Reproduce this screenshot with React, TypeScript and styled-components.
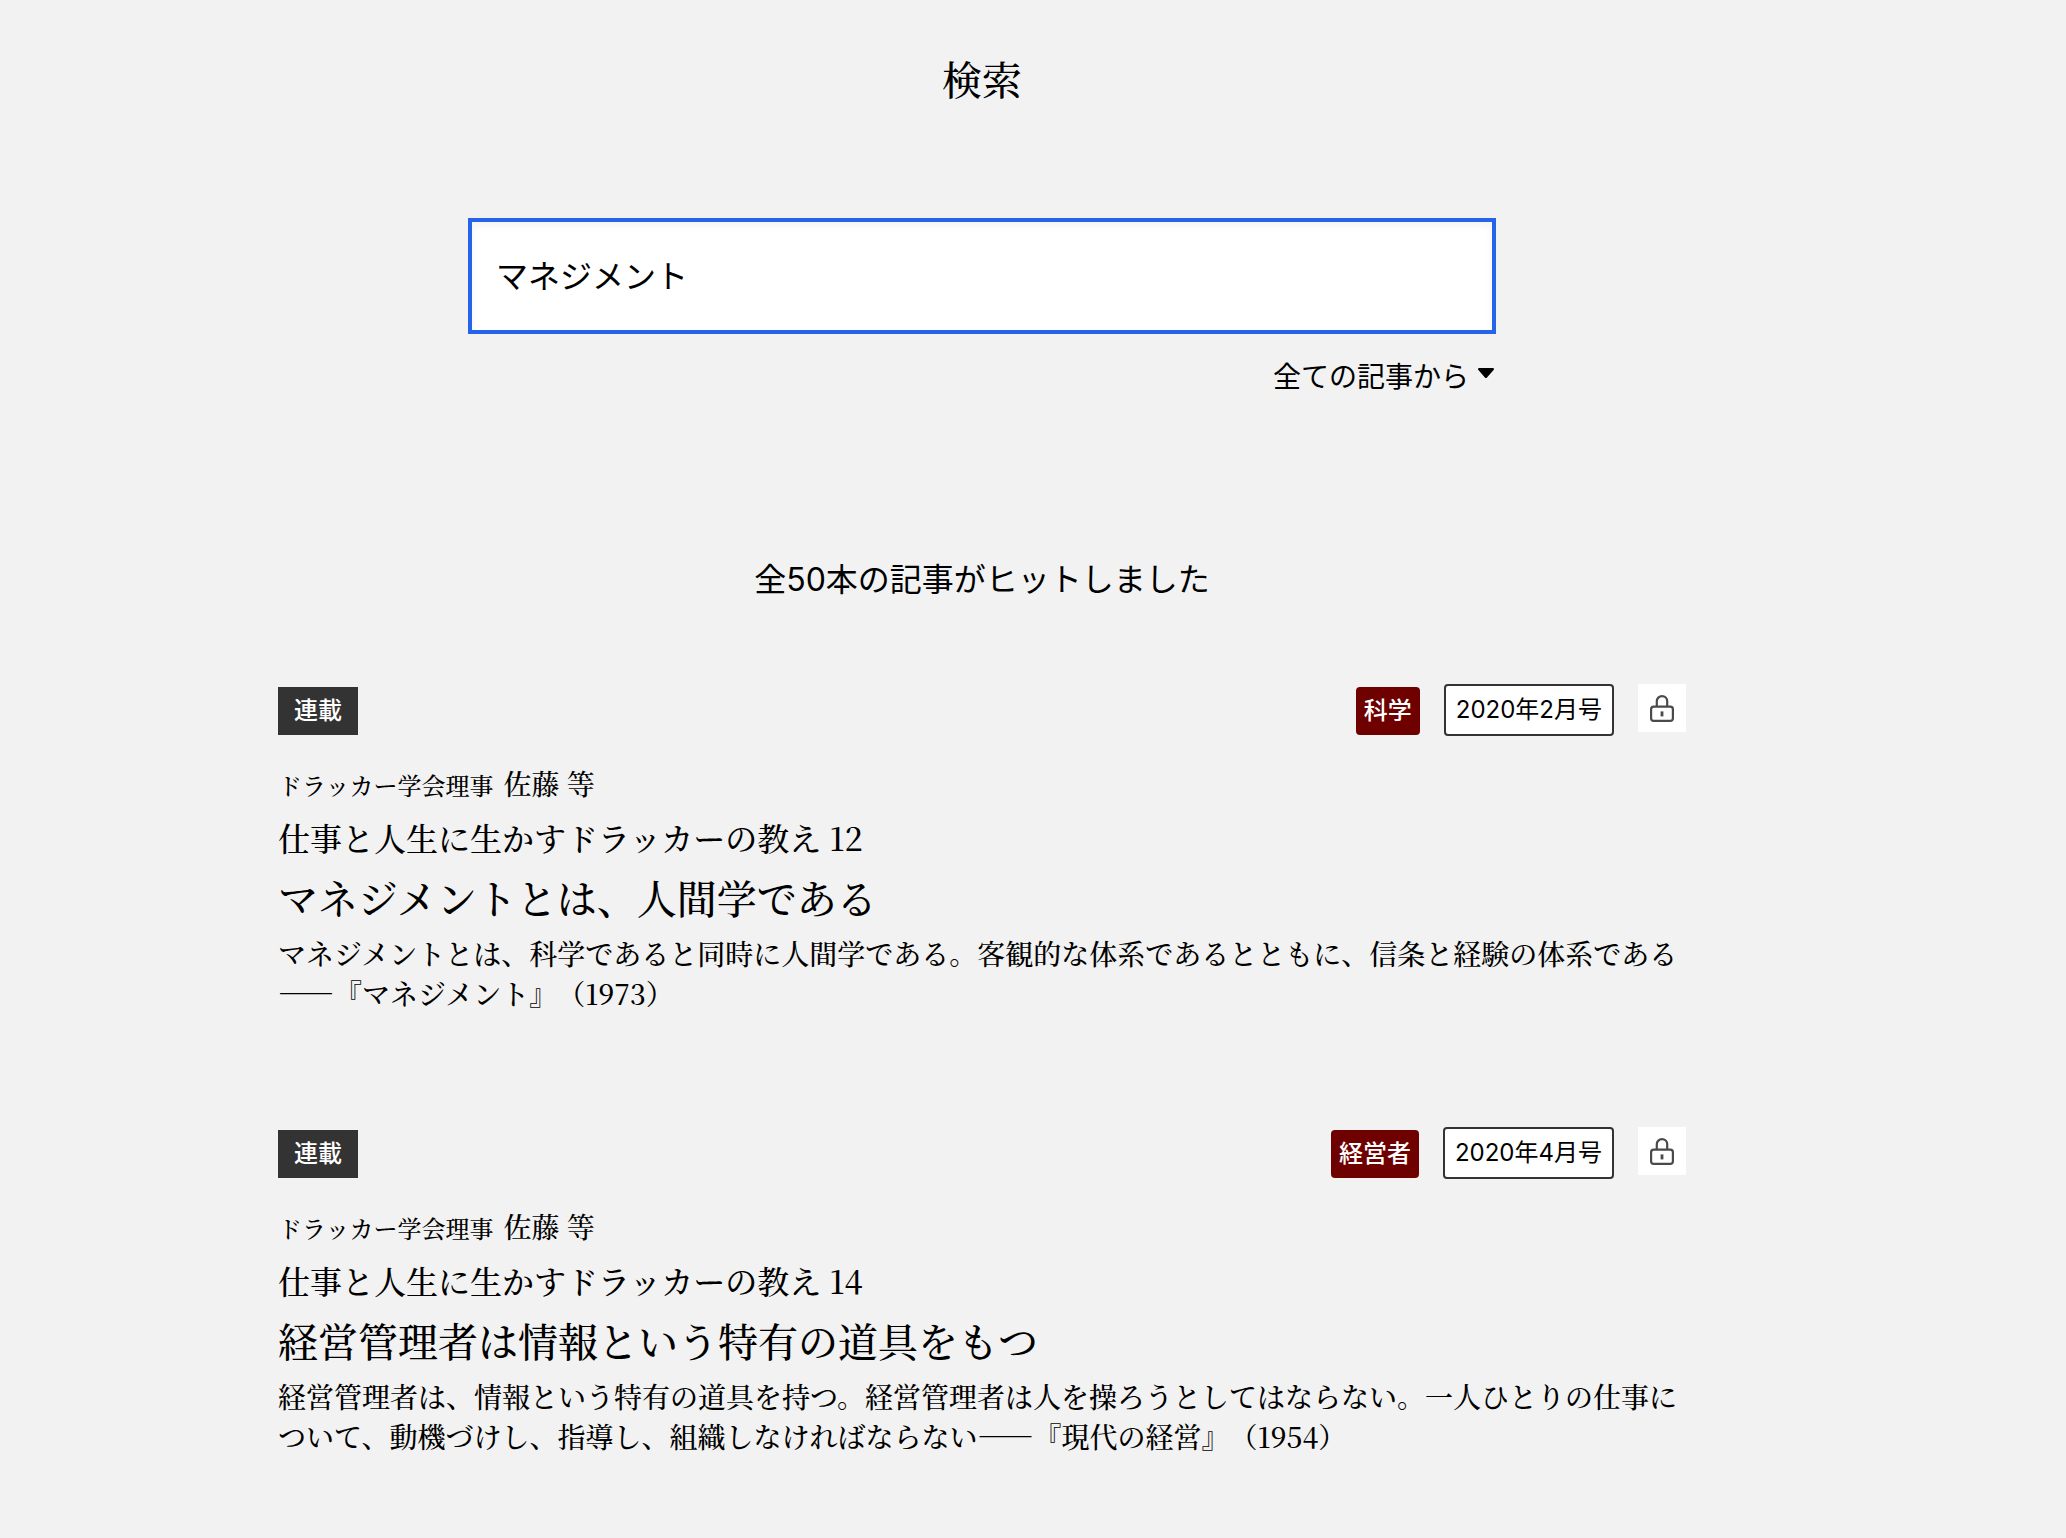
import React, { useState } from 'react';
import styled, { createGlobalStyle } from 'styled-components';

const gothic = `Inter, "Noto Sans CJK JP", sans-serif`;
const mincho = `"Noto Serif CJK JP", "Hiragino Mincho ProN", "Liberation Serif", serif`;

const GlobalStyle = createGlobalStyle`
  *, *::before, *::after { box-sizing: border-box; }
  body {
    margin: 0;
    background: #f2f2f2;
    color: #000;
    font-family: ${gothic};
    text-spacing-trim: space-all;
  }
`;

const Page = styled.main`
  display: flex;
  flex-direction: column;
  align-items: center;
  padding: 48px 102px 64px 0;
`;

const PageTitle = styled.h1`
  margin: 0 0 110px;
  font-family: ${mincho};
  font-size: 40px;
  font-weight: 500;
  line-height: 60px;
`;

const SearchForm = styled.form`
  display: flex;
  flex-direction: column;
  align-items: flex-end;
  gap: 20px;
  width: 100%;
  max-width: 1028px;
`;

const SearchInput = styled.input`
  width: 100%;
  height: 116px;
  padding: 0 24px 4px;
  border: 4px solid #2563eb;
  border-radius: 0;
  outline: none;
  background: #fff;
  box-shadow: inset 0 4px 8px rgba(0, 0, 0, 0.05);
  color: #000;
  font-family: ${gothic};
  font-size: 32px;
`;

const ScopeField = styled.label`
  display: flex;
  align-items: center;
`;

const ScopeSelect = styled.select`
  height: 46px;
  margin: 0 -24px 0 0;
  padding: 0 28px 0 0;
  border: 0;
  appearance: none;
  background: transparent;
  color: #000;
  font-family: ${gothic};
  font-size: 28px;
  line-height: 46px;
`;

const Caret = styled.svg`
  width: 16px;
  height: 10px;
  margin: 0 2px 8px 4px;
  pointer-events: none;
`;

const HitCount = styled.p`
  margin: 156px 0 80px;
  font-size: 32px;
  line-height: 48px;
`;

const Results = styled.div`
  display: flex;
  flex-direction: column;
  gap: 114px;
  width: 100%;
  max-width: 1408px;
`;

const Entry = styled.article`
  display: flex;
  flex-direction: column;
  gap: 8px;
  font-family: ${mincho};
  font-weight: 500;
`;

const EntryHeader = styled.header`
  display: flex;
  justify-content: space-between;
  align-items: center;
  height: 52px;
  margin-bottom: 17px;
  font-family: ${gothic};
  font-size: 24px;
  font-weight: 400;
`;

const Tags = styled.div`
  display: flex;
  align-items: center;
  gap: 24px;
`;

const Tag = styled.span<{ $kind: 'type' | 'topic' }>`
  height: 48px;
  margin-top: 2px;
  padding: 0 ${p => (p.$kind === 'type' ? 16 : 8)}px;
  border-radius: ${p => (p.$kind === 'type' ? 0 : 4)}px;
  background: ${p => (p.$kind === 'type' ? '#333' : '#6e0000')};
  color: #fff;
  font-weight: 500;
  line-height: 48px;
`;

const Issue = styled.span`
  height: 52px;
  padding: 0 10px;
  border: 2px solid #333;
  border-radius: 4px;
  background: #fff;
  line-height: 48px;
`;

const LockBox = styled.span`
  display: flex;
  align-items: center;
  justify-content: center;
  align-self: flex-start;
  width: 48px;
  height: 48px;
  background: #fff;
`;

const Author = styled.p`
  display: flex;
  align-items: baseline;
  gap: 10px;
  margin: 0;
  font-size: 28px;
  line-height: 44px;
`;

const Role = styled.span`
  font-size: 24px;
  line-height: 32px;
`;

const Series = styled.p`
  margin: 0;
  font-size: 32px;
  line-height: 48px;
`;

const EntryTitle = styled.h2`
  margin: 0;
  font-size: 40px;
  font-weight: 500;
  line-height: 56px;
`;

const EntryLink = styled.a`
  color: inherit;
  text-decoration: none;
`;

const Summary = styled.p`
  margin: 0;
  font-size: 28px;
  line-height: 40px;
`;

const LockIcon = () => (
  <svg width="24" height="27" viewBox="0 0 24 27" fill="none" stroke="#4a4a4a" strokeWidth="2.2" role="img" aria-label="会員限定">
    <rect x="1.1" y="11.6" width="21.8" height="14.3" rx="2.6" />
    <path d="M6.8 11.6V6.3a5.2 5.2 0 0 1 10.4 0v5.3" />
    <path d="M12 16.4v5" strokeWidth="2.8" />
  </svg>
);

const entries = [
  {
    topic: '科学',
    issue: '2020年2月号',
    series: '仕事と人生に生かすドラッカーの教え 12',
    title: 'マネジメントとは、人間学である',
    summary:
      'マネジメントとは、科学であると同時に人間学である。客観的な体系であるとともに、信条と経験の体系である——『マネジメント』（1973）',
  },
  {
    topic: '経営者',
    issue: '2020年4月号',
    series: '仕事と人生に生かすドラッカーの教え 14',
    title: '経営管理者は情報という特有の道具をもつ',
    summary:
      '経営管理者は、情報という特有の道具を持つ。経営管理者は人を操ろうとしてはならない。一人ひとりの仕事について、動機づけし、指導し、組織しなければならない——『現代の経営』（1954）',
  },
];

export default function App() {
  const [query, setQuery] = useState('マネジメント');

  return (
    <>
      <GlobalStyle />
      <Page lang="ja">
        <PageTitle>検索</PageTitle>
        <SearchForm onSubmit={e => e.preventDefault()}>
          <SearchInput
            type="text"
            aria-label="検索"
            value={query}
            onChange={e => setQuery(e.target.value)}
          />
          <ScopeField>
            <ScopeSelect aria-label="検索範囲">
              <option>全ての記事から</option>
            </ScopeSelect>
            <Caret viewBox="0 0 16 10" aria-hidden="true">
              <path d="M1.4 0h13.2c1.2 0 1.8 1.2 1 2.1L9 9.4c-.6.7-1.5.7-2.1 0L.4 2.1C-.4 1.2.2 0 1.4 0z" />
            </Caret>
          </ScopeField>
        </SearchForm>
        <HitCount>全50本の記事がヒットしました</HitCount>
        <Results>
          {entries.map(entry => (
            <Entry key={entry.title}>
              <EntryHeader>
                <Tag $kind="type">連載</Tag>
                <Tags>
                  <Tag $kind="topic">{entry.topic}</Tag>
                  <Issue>{entry.issue}</Issue>
                  <LockBox>
                    <LockIcon />
                  </LockBox>
                </Tags>
              </EntryHeader>
              <Author>
                <Role>ドラッカー学会理事</Role>
                <span>佐藤 等</span>
              </Author>
              <Series>{entry.series}</Series>
              <EntryTitle>
                <EntryLink href="#">{entry.title}</EntryLink>
              </EntryTitle>
              <Summary>{entry.summary}</Summary>
            </Entry>
          ))}
        </Results>
      </Page>
    </>
  );
}
